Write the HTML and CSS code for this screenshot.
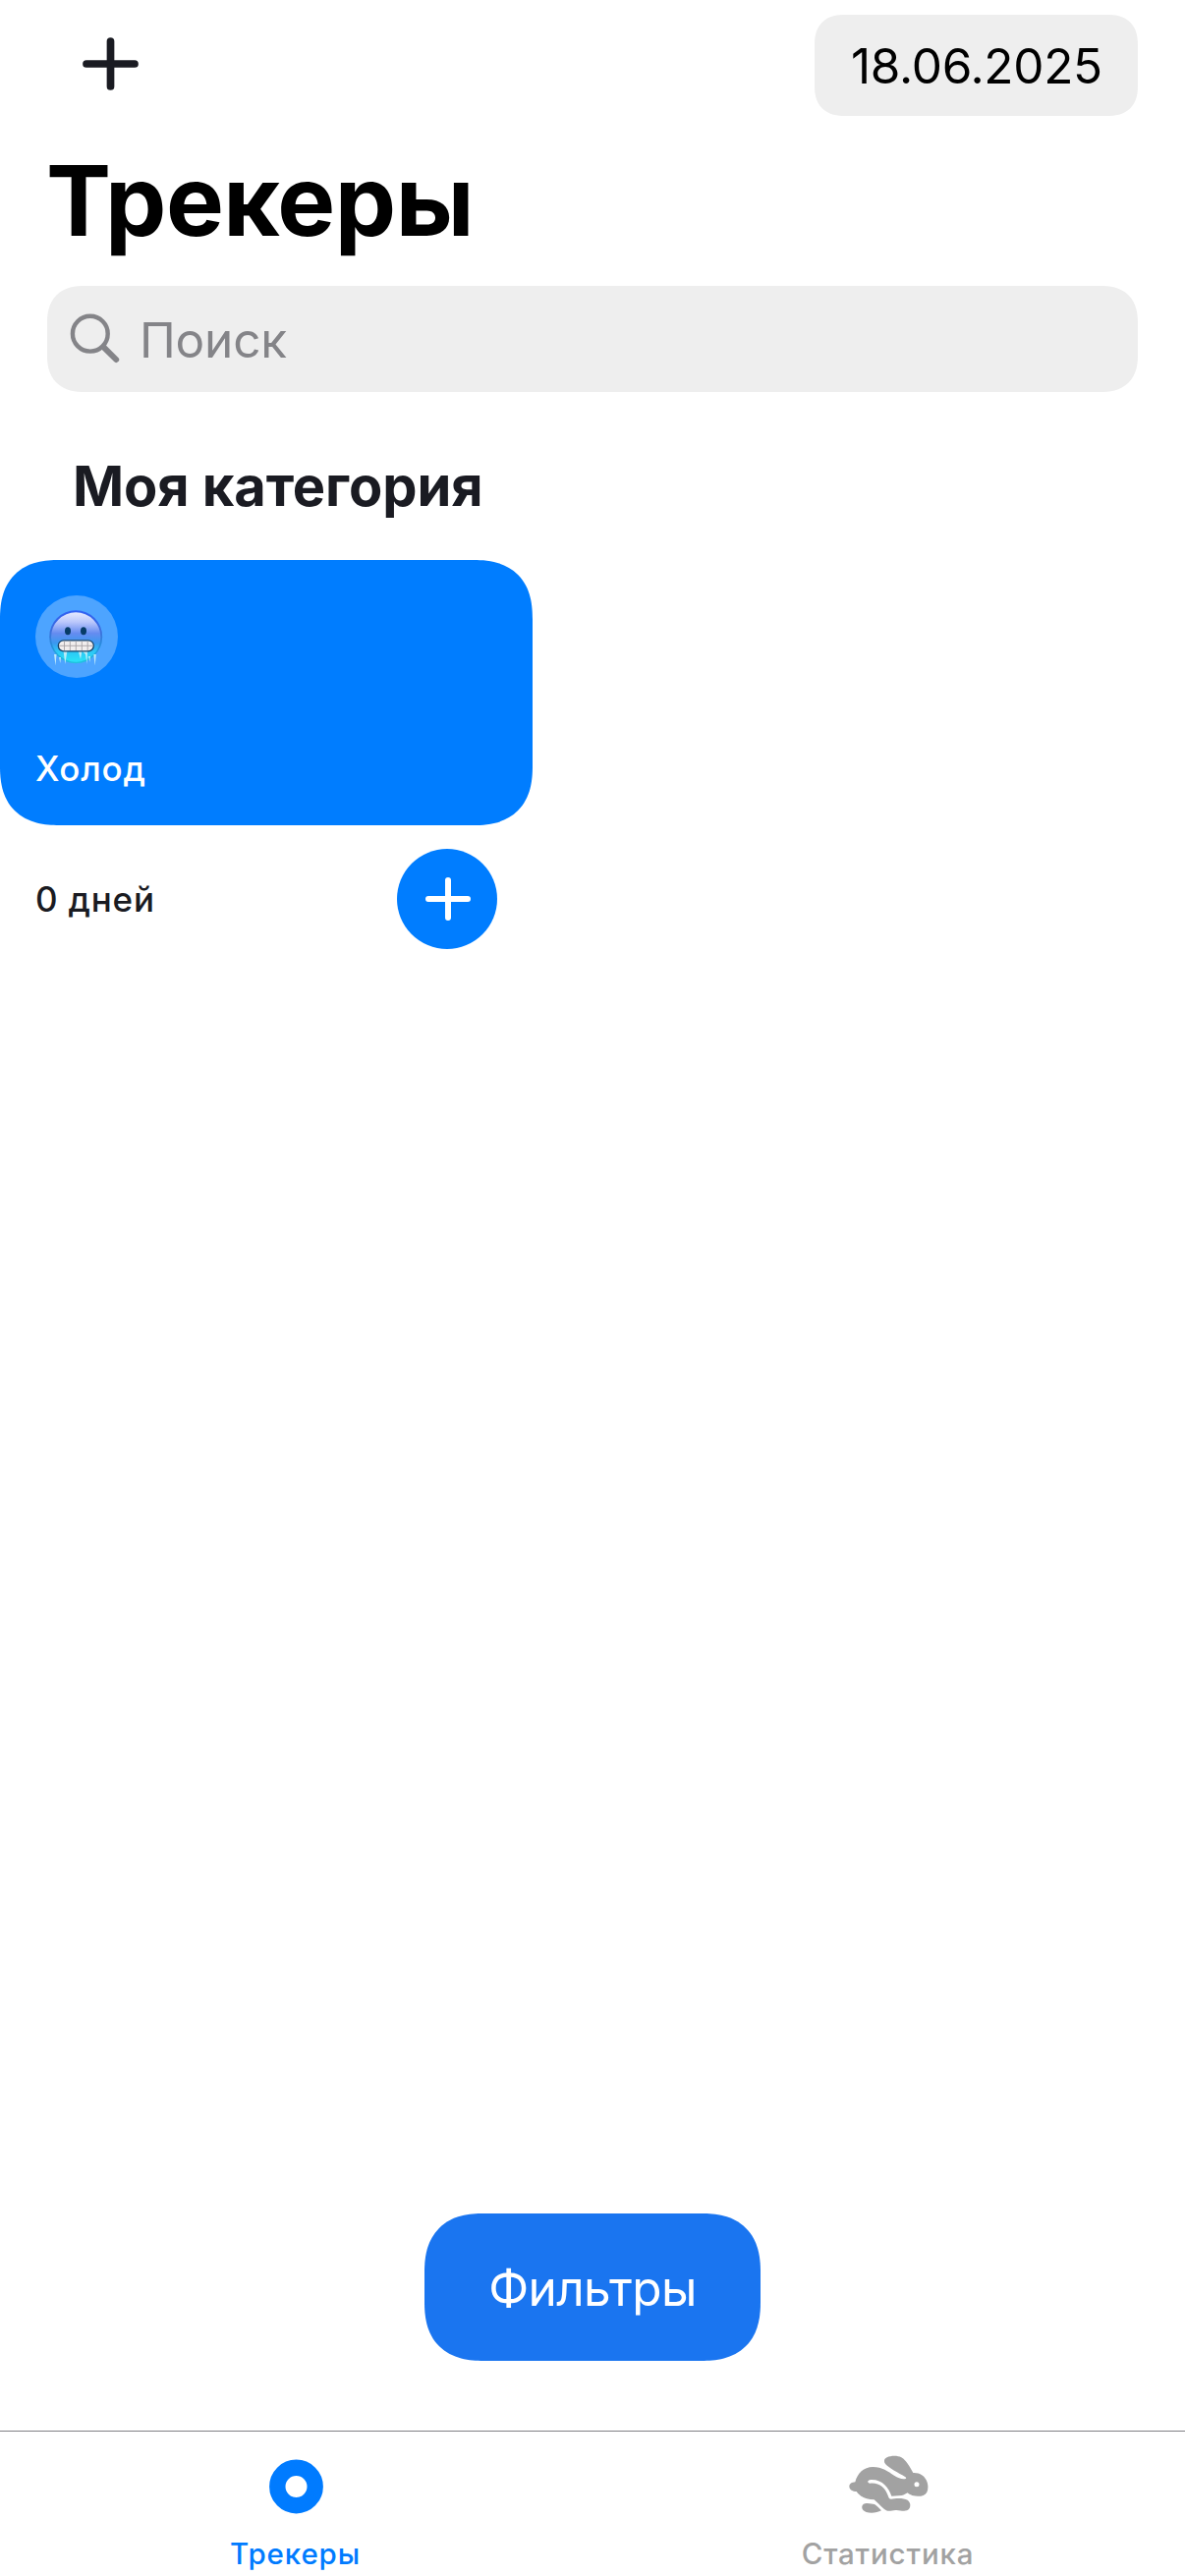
FILE: index.html
```html
<!DOCTYPE html>
<html lang="ru">
<head>
<meta charset="utf-8">
<title>Трекеры</title>
<link rel="stylesheet" href="styles.css">
</head>
<body>
<div class="screen">
  <header class="toolbar">
    <button class="add" aria-label="Добавить">
      <svg width="58" height="54" viewBox="0 0 58 54"><path d="M5 27H54M29.500 4V50" stroke="#1a1b22" stroke-width="7.700" stroke-linecap="round"/></svg>
    </button>
    <div class="date"><span>18.06.2025</span></div>
  </header>
  <h1 class="title">Трекеры</h1>
  <div class="search">
    <svg width="50" height="50" viewBox="0 0 50 50" fill="none" stroke="#848488"><circle cx="19.800" cy="20.700" r="17.900" stroke-width="4.400"/><path d="M33.500 34.300L46.200 47" stroke-width="6" stroke-linecap="round"/></svg>
    <span class="placeholder">Поиск</span>
  </div>
  <main class="content">
    <h2 class="category">Моя категория</h2>
    <article class="tracker">
      <div class="card">
        <div class="emoji">
          <svg width="84" height="84" viewBox="0 0 84 84">
            <defs>
              <linearGradient id="rim" x1="0" y1="0" x2="0" y2="1">
                <stop offset="0" stop-color="#3060f4"/><stop offset=".4" stop-color="#3d70dc"/><stop offset=".7" stop-color="#2592dc"/><stop offset="1" stop-color="#22c4e0"/>
              </linearGradient>
              <linearGradient id="face" x1="0" y1="0" x2="0" y2="1">
                <stop offset="0" stop-color="#e6eaff"/><stop offset=".2" stop-color="#b9c6fb"/><stop offset=".42" stop-color="#668cf0"/><stop offset=".62" stop-color="#3a98f0"/><stop offset=".8" stop-color="#2cc8f6"/><stop offset="1" stop-color="#2ae4f6"/>
              </linearGradient>
            </defs>
            <circle cx="41.200" cy="42.200" r="27" fill="url(#rim)"/>
            <circle cx="41.200" cy="42.500" r="25.200" fill="url(#face)"/>
            <ellipse cx="33" cy="36.300" rx="3" ry="4" fill="#073c68"/>
            <ellipse cx="49" cy="36.300" rx="3" ry="4" fill="#073c68"/>
            <path d="M19 60h2.500L20.500 71.500ZM24 63h2L25.300 69ZM28.500 56h4L30.300 70ZM43.500 56h4L46 65ZM47 56h6L52.500 70 51 60ZM54 62h2L55.300 68ZM59.300 60h2.500L60.700 71.500Z" fill="#c9effa" opacity=".9"/>
            <rect x="23.300" y="45.800" width="36" height="11" rx="5.500" fill="#f2eeee" stroke="#194369" stroke-width="1.300"/>
            <path d="M24 51.300H59M29.500 46.500v9.500M35.300 46.500v9.500M41.300 46.500v9.500M47.300 46.500v9.500M53.200 46.500v9.500" stroke="#a6a1a5" stroke-width=".9"/>
          </svg>
        </div>
        <span class="name">Холод</span>
      </div>
      <div class="row">
        <span class="days">0 дней</span>
        <button class="done" aria-label="Выполнено">
          <svg width="48" height="46" viewBox="0 0 48 46"><path d="M4 23H44M24 4V42" stroke="#fff" stroke-width="6" stroke-linecap="round"/></svg>
        </button>
      </div>
    </article>
  </main>
  <button class="filters"><span>Фильтры</span></button>
  <nav class="tabs">
    <a class="tab active">
      <svg width="84" height="60" viewBox="0 0 84 60"><circle cx="41.500" cy="30" r="19.200" fill="none" stroke="#007bff" stroke-width="16.400"/></svg>
      <span>Трекеры</span>
    </a>
    <a class="tab">
      <svg width="84" height="60" viewBox="218 153 252 180">
        <path fill="#a2a2a2" d="M240 229C247 202 266 183 294 183C323 183 340 197 359 209C372 217 384 222 394 219C397 217 395 214 391 212C374 203 343 186 333 175C326 166 328 158 337 154C349 148 370 148 381 154C397 164 406 182 417 201C438 200 451 211 457 223C463 235 464 249 459 260C451 273 433 275 414 270C408 268 403 265 400 262C394 264 390 270 382 270L351 272C342 246 324 221 288 222C277 222 275 233 286 233C315 231 331 246 340 270C342 277 344 281 350 281C364 278 388 277 400 284C412 293 410 311 398 316C386 320 376 314 363 315C350 316 340 321 329 312C316 302 306 289 298 283C277 283 258 277 244 258C233 258 222 252 222 243C222 234 230 230 240 229Z"/>
        <path fill="#a2a2a2" d="M270 295C281 292 292 297 299 297C306 301 313 309 320 316C308 323 288 326 274 321C257 316 257 298 270 295Z"/>
        <circle cx="428" cy="236" r="7.500" fill="#fff"/>
      </svg>
      <span>Статистика</span>
    </a>
  </nav>
</div>
</body>
</html>
```
FILE: styles.css
```css
* { box-sizing: border-box; }
body { margin: 0; background: #fff; font-family: Inter, "Liberation Sans", sans-serif; }
button { border: 0; padding: 0; margin: 0; background: none; font: inherit; }
svg { display: block; overflow: visible; }
span { white-space: nowrap; }

.screen { display: flex; flex-direction: column; width: 1206px; height: 2622px; overflow: hidden; }

.toolbar { display: flex; justify-content: space-between; align-items: flex-start; height: 118px; padding: 15px 48px 0 83px; }
.add { padding-top: 23px; }
.date { width: 329px; height: 103px; padding-left: 37px; border-radius: 24px; background: #eee; color: #000; font-size: 49.500px; line-height: 104px; letter-spacing: -.3px; }

.title { margin: 0; padding-left: 47px; height: 173px; font-size: 99px; font-weight: 700; line-height: 172px; letter-spacing: -.5px; color: #000; }

.search { display: flex; height: 108px; margin: 0 48px; padding: 28px 24px 0; gap: 20px; border-radius: 30px; background: #eee; color: #848488; }
.placeholder { font-size: 49.500px; line-height: 54px; letter-spacing: -.2px; }

.category { margin: 0; height: 171px; padding: 21px 0 0 74px; font-size: 56px; font-weight: 700; line-height: 150px; letter-spacing: -.1px; color: #1a1b22; }

.tracker { width: 541.500px; }
.card { display: flex; flex-direction: column; justify-content: space-between; height: 270px; padding: 36px 36px 34px; border-radius: 48px; background: #007dff; color: #fff; }
.emoji { width: 84px; height: 84px; border-radius: 50%; background: #4da4ff; }
.name, .days { font-size: 35px; font-weight: 500; line-height: 48px; letter-spacing: .8px; }
.row { display: flex; align-items: center; justify-content: space-between; margin-top: 24px; padding: 0 35.500px 0 36px; height: 102px; color: #1a1b22; }
.done { display: grid; place-items: center; width: 102px; height: 102px; padding-left: 2px; border-radius: 50%; background: #007dff; }

.filters { align-self: center; margin-top: auto; width: 342px; height: 150px; border-radius: 48px; background: #1a75f0; color: #fff; font-size: 49.500px; line-height: 152px; letter-spacing: -.65px; }

.tabs { display: flex; margin-top: 71px; height: 148px; border-top: 1px solid #808085; }
.tab { flex: 1; display: flex; flex-direction: column; align-items: center; padding-top: 26px; color: #a2a2a2; font-size: 29.500px; font-weight: 500; line-height: 38px; letter-spacing: .85px; }
.tab span { margin-top: 19px; padding-right: 2px; }
.active { color: #007bff; }

@supports (corner-shape: squircle) {
  .card, .filters { border-radius: 60px; corner-shape: superellipse(1.28); }
  .date { border-radius: 31px; corner-shape: superellipse(1.28); }
  .search { border-radius: 38px; corner-shape: superellipse(1.28); }
}
```
